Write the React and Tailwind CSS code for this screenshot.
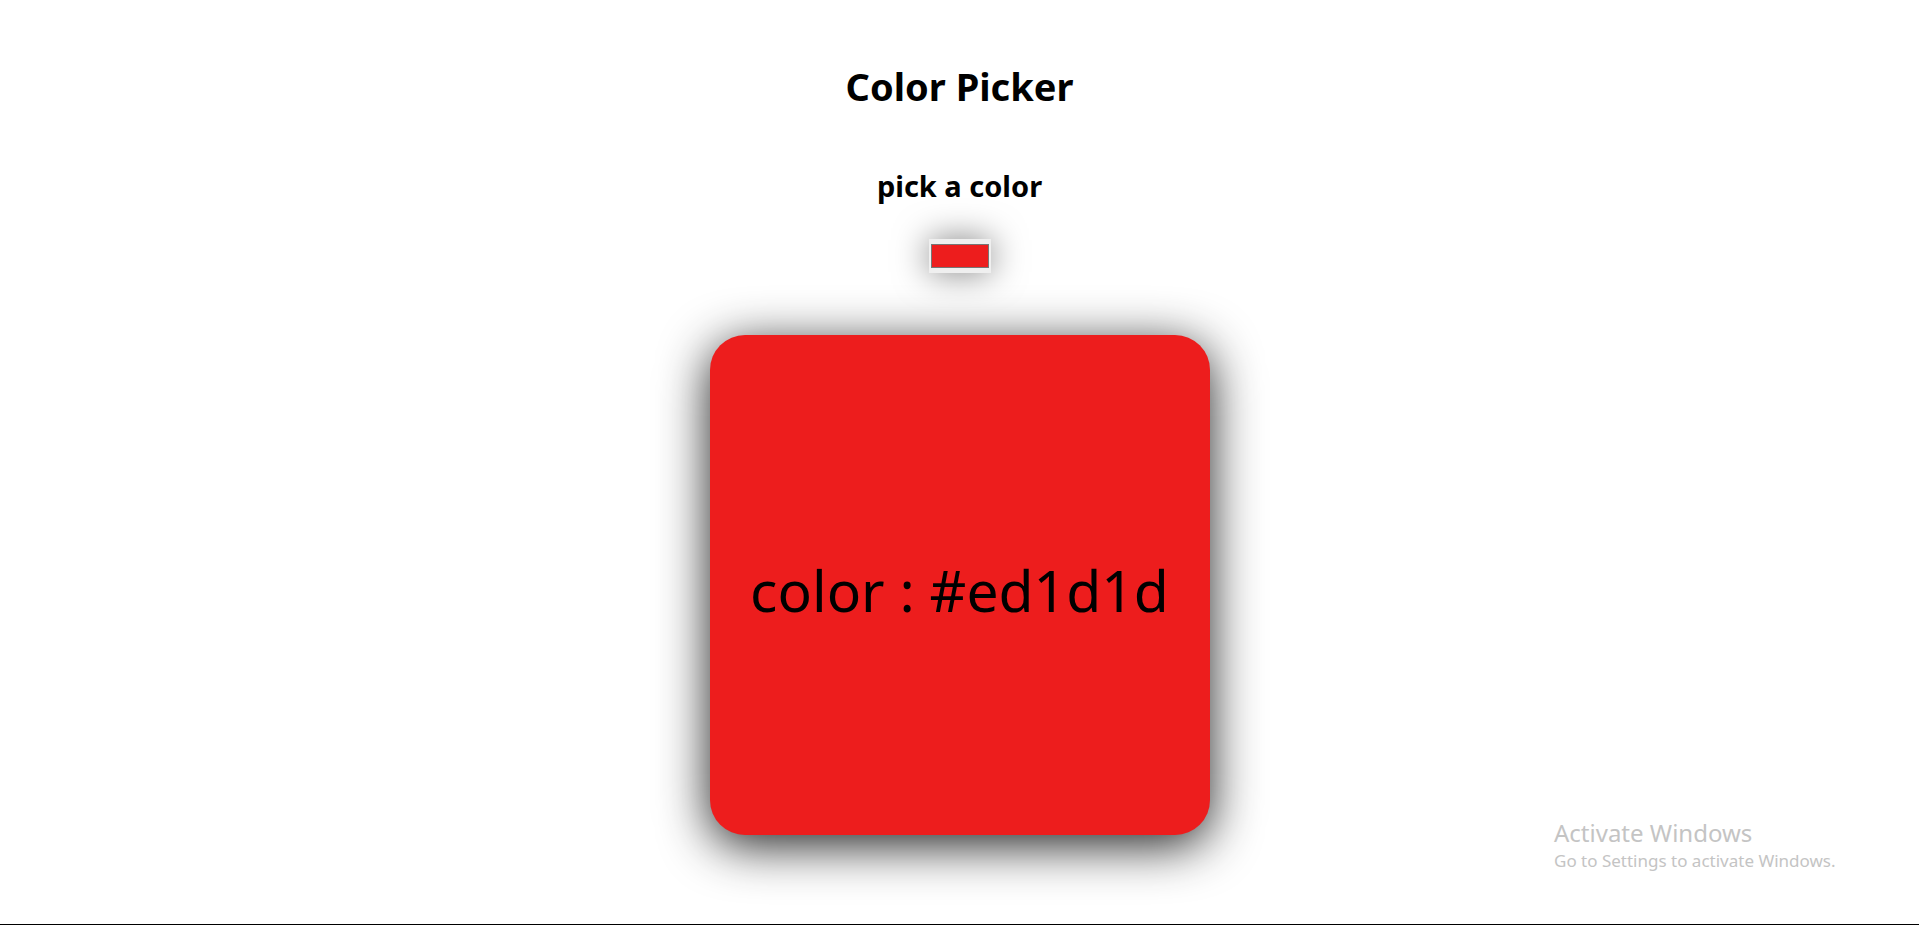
import React from "react";

export default function App() {
  return (
    <div
      className="relative min-h-screen h-[925px] bg-white border-b border-black overflow-hidden"
      style={{ fontFamily: '"Noto Sans", "Open Sans", sans-serif' }}
    >
      <div className="flex flex-col items-center">
        <h1 className="mt-[58px] text-[38px] leading-[56px] font-bold text-black">Color Picker</h1>
        <h2 className="mt-[54px] text-[29px] leading-[36px] font-bold text-black">pick a color</h2>
        <div className="mt-[35px] w-[62px] h-[34px] bg-[#efefef] flex items-center justify-center shadow-[0_0_34px_rgba(0,0,0,0.5)]">
          <div className="w-[58px] h-[24px] bg-[#ed1d1d] border border-[#767676]" />
        </div>
        <div className="mt-[62px] w-[500px] h-[500px] rounded-[35px] bg-[#ed1d1d] flex items-center justify-center shadow-[0_10px_50px_rgba(0,0,0,0.88)]">
          <span className="text-[57px] text-black font-normal mt-[12px]">color : #ed1d1d</span>
        </div>
      </div>
      <div className="absolute left-[1554px] top-[818px] text-[#c4c4c4] leading-tight">
        <div className="text-[24px]">Activate Windows</div>
        <div className="text-[17px] mt-[2px]">Go to Settings to activate Windows.</div>
      </div>
    </div>
  );
}
